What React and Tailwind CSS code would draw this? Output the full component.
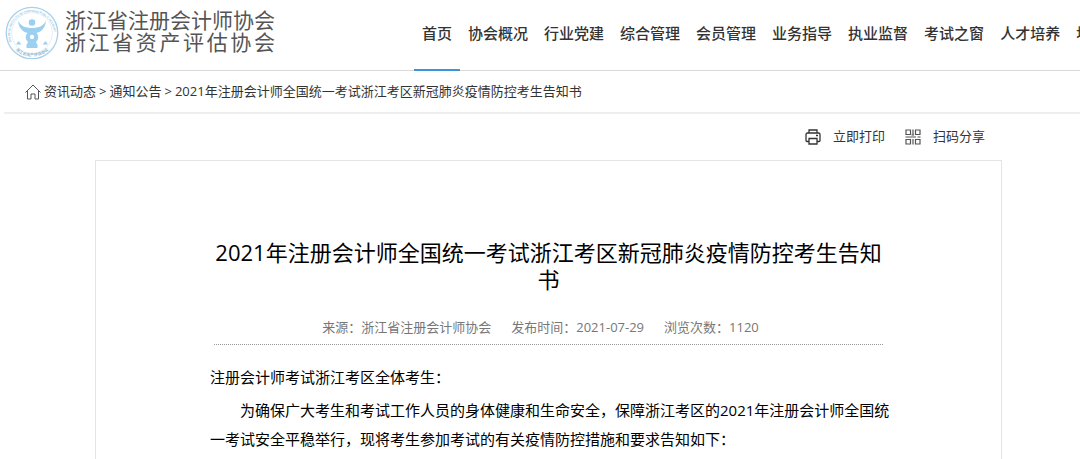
const NAV = ['首页', '协会概况', '行业党建', '综合管理', '会员管理', '业务指导', '执业监督', '考试之窗', '人才培养', '地方工作'];

function Emblem() {
  return (
    <svg viewBox="0 0 54 54" className="size-[54px] shrink-0" role="img" aria-label="协会会徽">
      <defs>
        <path id="ringTop" d="M6.500 36 A22 22 0 1 1 47.500 36" />
        <path id="ringBottom" d="M10 43.5 A24 24 0 0 0 44 43.5" />
      </defs>
      <circle cx="27" cy="27" r="25.7" fill="#fff" stroke="#a9d0ea" strokeWidth="1.3" />
      <circle cx="27" cy="27" r="20.3" fill="none" stroke="#d5e8f4" strokeWidth="0.7" />
      <text fontSize="2.800" fill="#5f9fca" fontFamily="Liberation Sans, sans-serif">
        <textPath href="#ringTop">ZHEJIANG INSTITUTE OF CERTIFIED PUBLIC ACCOUNT</textPath>
      </text>
      <text fontSize="4" fill="#4c90c0" fontFamily="Noto Sans CJK SC, sans-serif" textAnchor="middle">
        <textPath href="#ringBottom" startOffset="50%">浙江省资产评估协会</textPath>
      </text>
      <g fill="#9bd0f0">
        <circle cx="27" cy="16.500" r="3.300" />
        <path d="M13 14.500C15 19.500 20 22 27 22S39 19.500 41 14.500C40.500 21.500 37 25.500 31.500 27A6 6 0 0 1 31 36L32.500 39V42H21.500V39L23 36A6 6 0 0 1 22.500 27C17 25.500 13.500 21.500 13 14.500Z" />
        <path d="M11 38.500 13.500 35 16.500 38.500ZM37.500 38.500 40.500 35 43 38.500Z" />
      </g>
      <circle cx="27" cy="31" r="2.200" fill="#fff" />
    </svg>
  );
}

function HomeIcon() {
  return (
    <svg viewBox="0 0 16 16" className="size-4 shrink-0" fill="none" stroke="#555" strokeWidth="1" aria-hidden="true">
      <path d="M0.500 8.500 8 1 15.500 8.500M2.500 7V15H6V10H10V15H13.500V7" />
    </svg>
  );
}

function PrintIcon() {
  return (
    <svg viewBox="0 0 16 16" className="size-4 shrink-0" fill="none" stroke="#333" strokeWidth="1.300" aria-hidden="true">
      <path d="M4 4V1H12V4M4 12.500H2A1 1 0 0 1 1 11.500V5.500A1.500 1.500 0 0 1 2.500 4H13.500A1.500 1.500 0 0 1 15 5.500V11.500A1 1 0 0 1 14 12.500H12M4 9.500H12V15H4ZM11 6.500H13" />
    </svg>
  );
}

function CodeIcon() {
  return (
    <svg viewBox="0 0 16 16" className="size-4 shrink-0" fill="none" stroke="#555" strokeWidth="1.200" aria-hidden="true">
      <path d="M1 1H5.500V5.500H1ZM10.500 1H15V5.500H10.500ZM1 10.500H5.500V15H1ZM10.500 10.500H15V15H10.500ZM8 0.500V6.500M6.500 6H9M0.500 8H11M12.500 8H15.500M8 10V15.500" />
    </svg>
  );
}

export default function App() {
  return (
    <div className="overflow-hidden bg-white font-['Open_Sans','Noto_Sans_CJK_SC',sans-serif] text-[#333]">
      <header className="flex h-[71px] justify-between border-b border-[#d9d9d9]">
        <a href="#" className="flex items-start gap-1.5 pt-1.5 pl-[5px] text-[#555]">
          <Emblem />
          <span className="flex w-[210px] flex-col pt-[3px] text-[21px] leading-[22px] whitespace-nowrap">
            <span>浙江省注册会计师协会</span>
            <span className="[text-align-last:justify]">浙江省资产评估协会</span>
          </span>
        </a>
        <nav className="-mb-px flex w-[666px] shrink-0 overflow-hidden text-[15px] font-medium whitespace-nowrap">
          {NAV.map((label, i) => (
            <a
              key={label}
              href="#"
              className={`flex shrink-0 items-center border-b-2 px-2 pb-0.5 ${i === 0 ? 'border-[#3d94d6]' : 'border-transparent'}`}
            >
              {label}
            </a>
          ))}
        </nav>
      </header>

      <div className="ml-1 flex h-[43px] items-center gap-[3px] border-b-2 border-[#eee] pl-[21px] text-[13px] whitespace-nowrap">
        <HomeIcon />
        <a href="#">资讯动态</a>
        <span>&gt;</span>
        <a href="#">通知公告</a>
        <span>&gt;</span>
        <span>2021年注册会计师全国统一考试浙江考区新冠肺炎疫情防控考生告知书</span>
      </div>

      <main className="mr-[78px] ml-[95px]">
        <div className="flex h-[46px] items-center justify-end gap-5 pr-[17px] text-[13px]">
          <button type="button" className="flex items-center gap-3">
            <PrintIcon />
            立即打印
          </button>
          <button type="button" className="flex items-center gap-3">
            <CodeIcon />
            扫码分享
          </button>
        </div>
        <article className="border border-[#e4e4e4] px-[118px] pt-[78px] text-black">
          <h1 className="text-center text-[22px] leading-[27px]">
            2021年注册会计师全国统一考试浙江考区新冠肺炎疫情防控考生告知书
          </h1>
          <div className="mt-4 flex justify-center gap-5 border-b border-dotted border-[#999] pt-2 pr-4 pb-[7px] text-[13px] leading-5 text-[#777]">
            <span>来源：浙江省注册会计师协会</span>
            <span>发布时间：2021-07-29</span>
            <span>浏览次数：1120</span>
          </div>
          <div className="-mr-3 -ml-1 pt-[18px] pb-3 text-[15px] leading-[29px]">
            <p className="mb-1">注册会计师考试浙江考区全体考生：</p>
            <p className="indent-[2em]">
              为确保广大考生和考试工作人员的身体健康和生命安全，保障浙江考区的2021年注册会计师全国统一考试安全平稳举行，现将考生参加考试的有关疫情防控措施和要求告知如下：
            </p>
          </div>
        </article>
      </main>
    </div>
  );
}
